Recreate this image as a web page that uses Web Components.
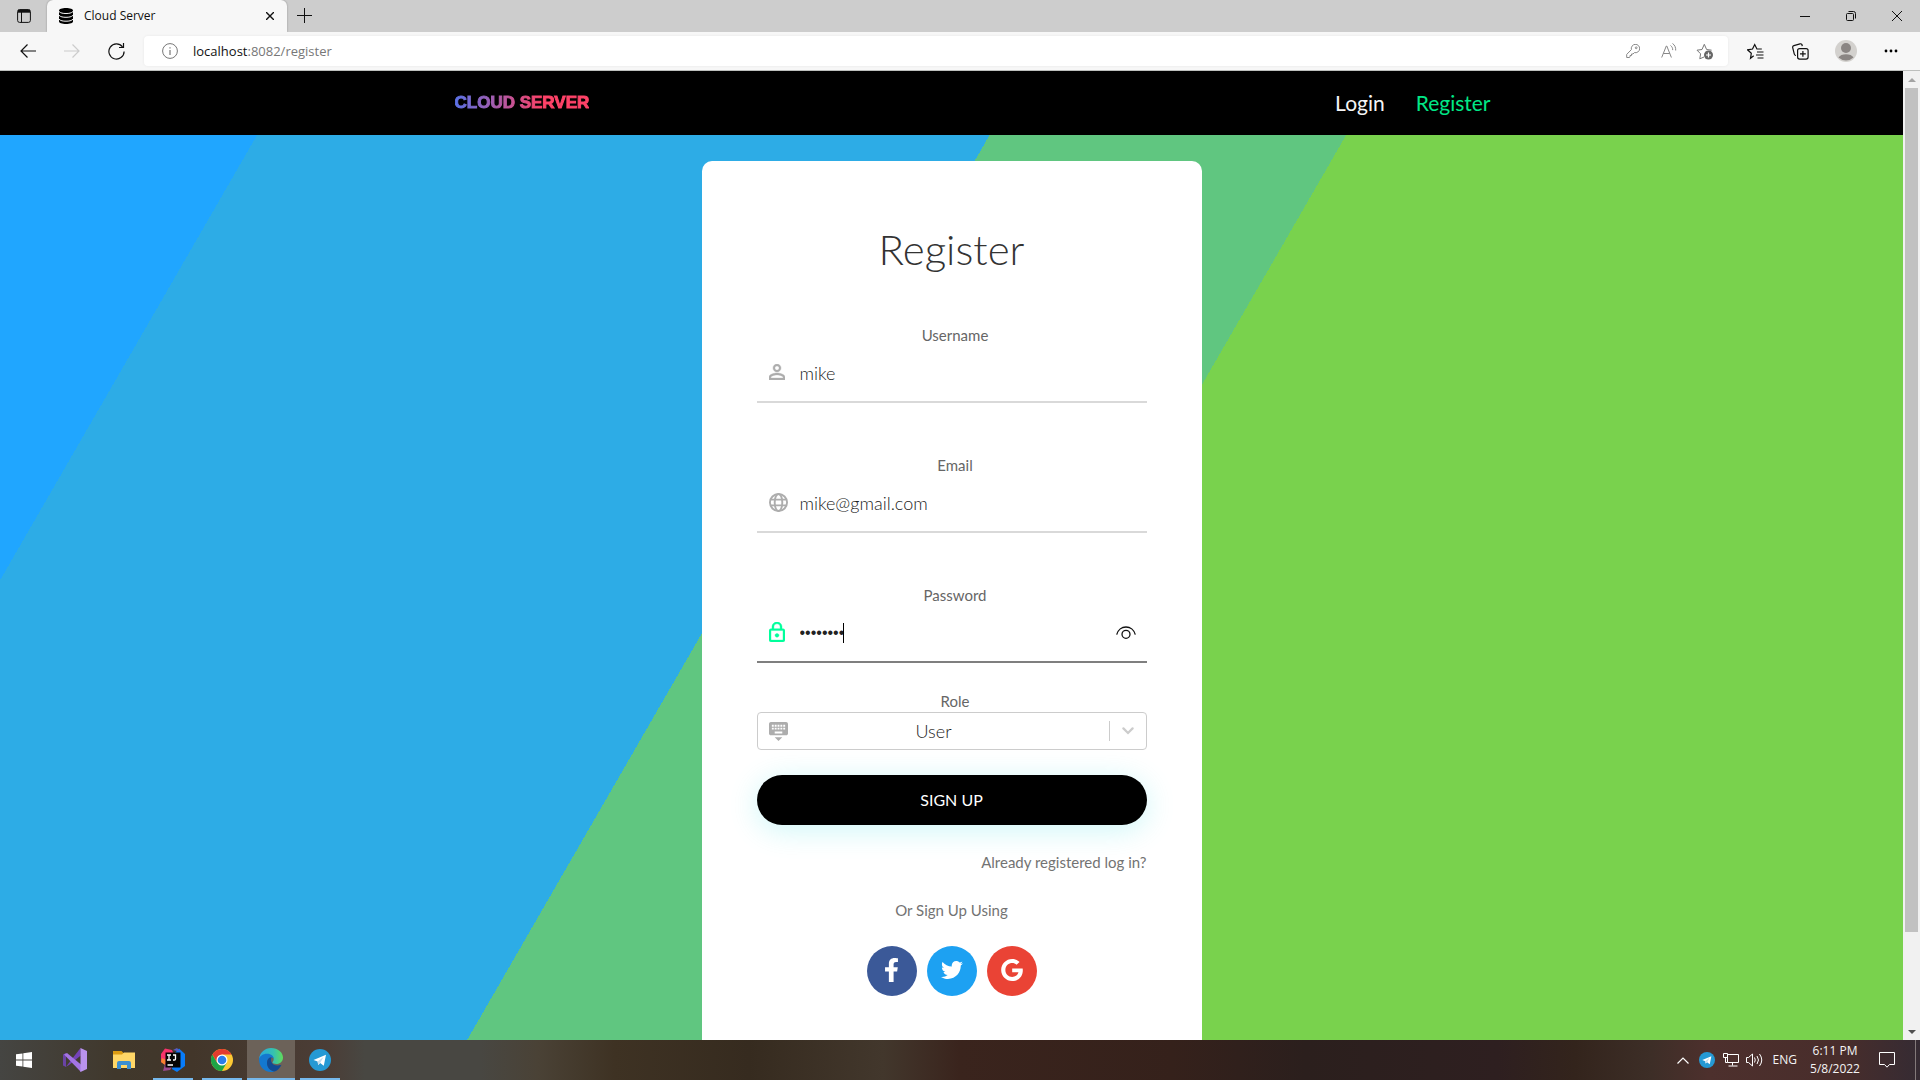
<!DOCTYPE html>
<html lang="en">
<head>
<meta charset="utf-8">
<title>Cloud Server</title>
<style>
  html, body { height: 100%; margin: 0; }
  body { font-family: Lato, "Open Sans", sans-serif; overflow: hidden; }
</style>
</head>
<body>
<desktop-shell></desktop-shell>

<script>
const UI = '"Open Sans", "Noto Sans", sans-serif';

function define(name, css, html, setup) {
  const tpl = document.createElement('template');
  tpl.innerHTML = `<style>*{box-sizing:border-box}button{font:inherit;color:inherit;background:none;border:0;padding:0;margin:0}svg{display:block;flex:none}${css}</style>${html}`;
  customElements.define(name, class extends HTMLElement {
    constructor() {
      super();
      this.attachShadow({ mode: 'open' }).append(tpl.content.cloneNode(true));
    }
    connectedCallback() { if (setup) setup(this.shadowRoot, this); }
  });
}

/* ---------- browser tab strip ---------- */
define('tab-strip', `
  :host { display: flex; flex: none; height: 32px; background: #cdcdcd; font: 12px/16px ${UI}; color: #111; }
  button { display: grid; place-items: center; }
  .menu { width: 47px; }
  .tab { display: flex; align-items: center; gap: 11px; width: 240px; padding: 0 8px 0 12px; background: #f7f7f7; border-radius: 6px 6px 0 0; box-shadow: 0 0 2px #0005; clip-path: inset(0 -3px); }
  .tab span { flex: 1; }
  .close { width: 18px; height: 18px; }
  .add { width: 35px; height: 31px; }
  .win { display: flex; margin-left: auto; }
  .win button { width: 46px; }
`, `
  <button class="menu" aria-label="Tab actions"><svg width="14" height="14" viewBox="0 0 14 14" fill="none" stroke="#111"><rect x=".6" y=".6" width="12.8" height="12.8" rx="2"/><path d="M1 2.2h12" stroke-width="3"/><path d="M4.500 3v10.500"/></svg></button>
  <div class="tab">
    <svg width="14" height="16" viewBox="0 0 14 16"><path d="M0 2.500C0 1.100 3 0 7 0s7 1.100 7 2.500v11C14 14.900 11 16 7 16s-7-1.100-7-2.500z"/><path d="M0 3.500c1.500 1.600 4 2 7 2s5.500-.4 7-2M0 7.300c1.500 1.600 4 2 7 2s5.500-.4 7-2M0 11.200c1.500 1.600 4 2 7 2s5.500-.4 7-2" fill="none" stroke="#f7f7f7"/></svg>
    <span>Cloud Server</span>
    <button class="close" aria-label="Close tab"><svg width="8" height="8" viewBox="0 0 8 8" stroke="#111" stroke-width="1.400"><path d="M0 0l8 8M8 0L0 8"/></svg></button>
  </div>
  <button class="add" aria-label="New tab"><svg width="15" height="15" viewBox="0 0 15 15" stroke="#111" stroke-width="1"><path d="M0 7.500h15M7.500 0v15"/></svg></button>
  <div class="win">
    <button aria-label="Minimize"><svg width="10" height="10" viewBox="0 0 10 10" stroke="#111"><path d="M0 5.500h10"/></svg></button>
    <button aria-label="Restore"><svg width="10" height="10" viewBox="0 0 10 10" fill="none" stroke="#111"><rect x=".5" y="2.500" width="7" height="7" rx="1"/><path d="M2.500.5h5a2 2 0 0 1 2 2v5"/></svg></button>
    <button aria-label="Close"><svg width="10" height="10" viewBox="0 0 10 10" stroke="#111"><path d="M0 0l10 10M10 0L0 10"/></svg></button>
  </div>
`);

/* ---------- address toolbar ---------- */
define('address-toolbar', `
  :host { display: flex; flex: none; align-items: center; height: 39px; padding: 0 7px 0 6px; background: #f7f7f7; border-bottom: 1px solid #bdbfbd; font: 13px/20px ${UI}; }
  button { display: grid; place-items: center; width: 44px; height: 30px; }
  .bar { display: flex; flex: 1; align-items: center; height: 30px; margin: 0 5px 0 6px; padding: 0 5px 0 18px; background: #fff; border-radius: 4px; box-shadow: 0 0 3px #0001; }
  .url { flex: 1; margin-left: 15px; color: #777; }
  .url b { font-weight: 400; color: #111; }
  .bar button { width: 36px; }
  .tools { display: flex; }
  .tools button { width: 45px; }
`, `
  <button aria-label="Back"><svg width="16" height="14" viewBox="0 0 16 14" fill="none" stroke="#111" stroke-width="1.200"><path d="M16 7H1M7.500.5L1 7l6.500 6.500"/></svg></button>
  <button aria-label="Forward"><svg width="16" height="14" viewBox="0 0 16 14" fill="none" stroke="#ccc" stroke-width="1.200"><path d="M0 7h15M8.500.5L15 7l-6.500 6.500"/></svg></button>
  <button aria-label="Refresh"><svg width="17" height="17" viewBox="0 0 17 17" fill="none" stroke="#111" stroke-width="1.200"><path d="M14.500 3.800A7.600 7.600 0 1 0 16.100 8.500M15.500 0v4.500H11"/></svg></button>
  <div class="bar">
    <svg width="16" height="16" viewBox="0 0 16 16" fill="none" stroke="#777"><circle cx="8" cy="8" r="7.400"/><path d="M8 7v5M8 4.200v1.300" stroke-width="1.200"/></svg>
    <div class="url"><b>localhost</b>:8082/register</div>
    <button aria-label="Saved passwords"><svg width="14" height="14" viewBox="0 0 14 14" fill="none" stroke="#888"><path d="M5.400 5.600A4.200 4.200 0 1 1 8.400 8.600L7 10H5.500v1.500H4V13l-.5.500H.7v-3.100z"/><circle cx="10.200" cy="3.800" r=".9"/></svg></button>
    <button aria-label="Read aloud"><svg width="16" height="16" viewBox="0 0 16 16" fill="none" stroke="#888"><path d="M.7 14.500L5.300 3h.5l4.600 11.500M2.300 10.500h6.500M9.500 2.500c1.500 1 2.300 2.600 2.200 4.600M11.500.5c2.300 1.500 3.400 4 3.200 7"/></svg></button>
    <button aria-label="Add to favorites"><svg width="18" height="17" viewBox="0 0 18 17" fill="none" stroke="#777"><path d="M8 14l-4.200 1.800.8-5L1 7.200l5-.7L8.300 1.300l2.300 5.200 5 .7"/><circle cx="12.500" cy="12" r="4.500" fill="#666" stroke="none"/><path d="M12.500 9.500v5M10 12h5" stroke="#fff" stroke-width="1.200"/></svg></button>
  </div>
  <div class="tools">
    <button aria-label="Favorites"><svg width="17" height="17" viewBox="0 0 17 17" fill="none" stroke="#111" stroke-width="1.200"><path d="M7.200 12.800L4 15.300l.8-5L1 6.800l5-.8 2.200-4.500L10.400 6h4.900M10.500 9H17M9.500 12H17M11 15h6" transform="translate(-.5)"/></svg></button>
    <button aria-label="Collections"><svg width="17" height="17" viewBox="0 0 17 17" fill="none" stroke="#111" stroke-width="1.200"><path d="M4 12.500c-1 0-1.400-.5-1.700-1.400L.7 4.600c-.2-1 .2-1.700 1.200-2L8 .8c1-.2 1.800.1 2 1.200l.3 1.200"/><rect x="5.600" y="5.600" width="10.500" height="10.500" rx="2"/><path d="M10.900 8v5.800M8 10.900h5.800"/></svg></button>
    <button aria-label="Profile"><svg width="22" height="22" viewBox="0 0 22 22"><circle cx="11" cy="11" r="11" fill="#d3d1ce"/><circle cx="11" cy="8" r="5" fill="#8a8583"/><path d="M3.500 17.500c2-4.500 13-4.500 15 0a11 11 0 0 1-15 0z" fill="#8a8583"/></svg></button>
    <button aria-label="Settings and more"><svg width="14" height="4" viewBox="0 0 14 4"><circle cx="2" cy="2" r="1.400"/><circle cx="7" cy="2" r="1.400"/><circle cx="12" cy="2" r="1.400"/></svg></button>
  </div>
`);

/* ---------- site navigation ---------- */
define('site-nav', `
  :host { display: block; flex: none; background: #000; }
  nav { display: flex; align-items: center; gap: 31px; height: 64px; max-width: 1140px; margin: 0 auto; padding: 0 31px 0 73px; font-size: 21px; line-height: 28px; }
  a { color: #f5f5f5; text-decoration: none; }
  .brand { margin-right: auto; font: 900 17px/24px "Liberation Sans", Arial, sans-serif; background: linear-gradient(90deg, #5b72e8, #ff4268 65%); -webkit-background-clip: text; background-clip: text; color: transparent; -webkit-text-stroke: 1px transparent; }
  .on { color: #00e887; }
`, `<nav><a class="brand" href="#">CLOUD SERVER</a><a href="#">Login</a><a class="on" href="#">Register</a></nav>`);

/* ---------- underlined text field ---------- */
define('text-field', `
  :host { display: block; --line: #d9d9d9; --icon: #adadad; }
  :host([active]) { --line: #7f7f7f; --icon: #00ff9c; }
  label { display: block; padding-left: 7px; font-size: 15px; line-height: 22px; color: #666; text-align: center; }
  .row { display: grid; align-items: center; border-bottom: 2px solid var(--line); }
  .row > * { grid-area: 1 / 1; }
  input { width: 100%; height: 55px; padding: 0 43px 2px; border: 0; outline: 0; background: none; font: 300 18px/24px Lato, sans-serif; color: #222; }
  :host([active]) input { font: 16px/24px "Liberation Sans", sans-serif; }
  .icon { padding: 0 0 3px 12px; color: var(--icon); pointer-events: none; }
  .end { justify-self: end; padding: 0 11px 2px 0; }
  .caret { display: none; width: 1px; height: 20px; margin: 0 0 2px 86px; background: #000; }
  :host([active]) .caret { display: block; }
`, `
  <label for="f"></label>
  <div class="row"><input id="f"><span class="icon"><slot name="icon"></slot></span><i class="caret"></i><span class="end"><slot name="end"></slot></span></div>
`, (root, host) => {
  root.querySelector('label').textContent = host.getAttribute('label');
  const input = root.querySelector('input');
  input.type = host.getAttribute('type') || 'text';
  input.value = host.getAttribute('value');
});

/* ---------- role drop-down ---------- */
define('role-select', `
  :host { display: block; }
  label { display: block; padding-left: 7px; font-size: 15px; line-height: 22px; color: #666; text-align: center; }
  .box { display: grid; align-items: center; height: 38px; border: 1px solid #ccc; border-radius: 4px; }
  .box > * { grid-area: 1 / 1; }
  select { appearance: none; width: 100%; height: 36px; padding: 0 36px 0 0; border: 0; outline: 0; background: none; font: 300 18px/24px Lato, sans-serif; color: #222; text-align: center; text-align-last: center; }
  .icon { padding-left: 11px; pointer-events: none; }
  .arrow { display: flex; align-items: center; justify-self: end; width: 37px; height: 20px; padding-left: 12px; border-left: 1px solid #ccc; pointer-events: none; }
`, `
  <label for="role">Role</label>
  <div class="box">
    <select id="role"><option>User</option></select>
    <span class="icon"><svg width="19" height="19" viewBox="2 3 20 20" fill="#adadad"><path d="M20 3H4c-1.100 0-1.990.9-1.990 2L2 15c0 1.100.9 2 2 2h16c1.100 0 2-.9 2-2V5c0-1.100-.9-2-2-2zm-9 3h2v2h-2V6zm0 3h2v2h-2V9zM8 6h2v2H8V6zm0 3h2v2H8V9zm-1 2H5V9h2v2zm0-3H5V6h2v2zm9 7H8v-2h8v2zm0-4h-2V9h2v2zm0-3h-2V6h2v2zm3 3h-2V9h2v2zm0-3h-2V6h2v2zm-7 15l4-4H8l4 4z"/></svg></span>
    <span class="arrow"><svg width="12" height="8" viewBox="0 0 12 8" fill="none" stroke="#ccc" stroke-width="2.200" stroke-linecap="round"><path d="M1.400 1.400L6 6l4.600-4.600"/></svg></span>
  </div>
`);

/* ---------- registration card ---------- */
define('register-card', `
  :host { display: block; width: 500px; padding: 65px 55px 90px; background: #fff; border-radius: 10px; color: #333; }
  h1 { margin: 0 0 51px; font-weight: 300; font-size: 42px; line-height: 47px; text-align: center; }
  form { display: flex; flex-direction: column; }
  text-field + text-field { margin-top: 51px; }
  role-select { margin-top: 27px; }
  .submit { height: 50px; margin-top: 25px; border-radius: 25px; background: #000; color: #fff; font-size: 16px; line-height: 24px; box-shadow: 0 5px 30px 0 #03d8de33; }
  .login { align-self: flex-end; margin-top: 26px; font-size: 15px; line-height: 22px; color: #737373; text-decoration: none; }
  p { margin: 26px 0 25px; font-size: 15px; line-height: 22px; color: #737373; text-align: center; }
  .social { display: flex; justify-content: center; gap: 10px; }
  .social a { display: grid; place-items: center; width: 50px; height: 50px; padding-bottom: 3px; border-radius: 50%; }
`, `
  <h1>Register</h1>
  <form>
    <text-field label="Username" value="mike"><svg slot="icon" width="16" height="16" viewBox="4 4 16 16" fill="currentColor" stroke="currentColor" stroke-width=".4"><path d="M12 5.900c1.160 0 2.100.94 2.100 2.100s-.94 2.100-2.100 2.100S9.900 9.160 9.900 8s.94-2.100 2.100-2.100m0 9c2.970 0 6.100 1.460 6.100 2.100v1.100H5.900V17c0-.64 3.130-2.100 6.100-2.100M12 4C9.790 4 8 5.790 8 8s1.790 4 4 4 4-1.790 4-4-1.790-4-4-4zm0 9c-2.670 0-8 1.340-8 4v3h16v-3c0-2.660-5.330-4-8-4z"/></svg></text-field>
    <text-field label="Email" value="mike@gmail.com"><svg slot="icon" width="19" height="19" viewBox="0 0 20 20" fill="none" stroke="currentColor" stroke-width="2"><circle cx="10" cy="10" r="9"/><ellipse cx="10" cy="10" rx="4" ry="9"/><path d="M1.500 7h17M1.500 13h17"/></svg></text-field>
    <text-field label="Password" type="password" value="password" active><svg slot="icon" width="16" height="20" viewBox="4 1 16 21" fill="currentColor" stroke="currentColor" stroke-width=".4" preserveAspectRatio="none"><path d="M12 17c1.100 0 2-.9 2-2s-.9-2-2-2-2 .9-2 2 .9 2 2 2zm6-9h-1V6c0-2.760-2.240-5-5-5S7 3.240 7 6v2H6c-1.100 0-2 .9-2 2v10c0 1.100.9 2 2 2h12c1.100 0 2-.9 2-2V10c0-1.100-.9-2-2-2zM8.900 6c0-1.710 1.390-3.100 3.100-3.100s3.100 1.390 3.100 3.100v2H8.900V6zM18 20H6V10h12v10z"/></svg><svg slot="end" width="20" height="13" viewBox="0 0 20 13" fill="none" stroke="#111" stroke-width="1.300"><path d="M.7 8.700C3-1.600 17-1.600 19.300 8.700"/><circle cx="10" cy="8.300" r="4"/></svg></text-field>
    <role-select></role-select>
    <button class="submit" type="button">SIGN UP</button>
    <a class="login" href="#">Already registered log in?</a>
  </form>
  <p>Or Sign Up Using</p>
  <div class="social">
    <a href="#" aria-label="Facebook" style="background:#3b5998"><svg width="13" height="24" viewBox="22 0 276 512" preserveAspectRatio="none" fill="#fff"><path d="M279.140 288l14.220-92.660h-88.910v-60.130c0-25.350 12.420-50.060 52.240-50.060h40.420V6.260S260.430 0 225.360 0c-73.220 0-121.080 44.380-121.080 124.720v70.620H22.890V288h81.390v224h100.170V288z"/></svg></a>
    <a href="#" aria-label="Twitter" style="background:#1da1f2"><svg width="22" height="22" viewBox="0 0 512 512" fill="#fff"><path d="M459.370 151.716c.325 4.548.325 9.097.325 13.645 0 138.720-105.583 298.558-298.558 298.558-59.452 0-114.680-17.219-161.137-47.106 8.447.974 16.568 1.299 25.340 1.299 49.055 0 94.213-16.568 130.274-44.832-46.132-.975-84.792-31.188-98.112-72.772 6.498.974 12.995 1.624 19.818 1.624 9.421 0 18.843-1.300 27.614-3.573-48.081-9.747-84.143-51.980-84.143-102.985v-1.299c13.969 7.797 30.214 12.670 47.431 13.319-28.264-18.843-46.781-51.005-46.781-87.391 0-19.492 5.197-37.360 14.294-52.954 51.655 63.675 129.300 105.258 216.365 109.807-1.624-7.797-2.599-15.918-2.599-24.040 0-57.828 46.782-104.934 104.934-104.934 30.213 0 57.502 12.670 76.670 33.137 23.715-4.548 46.456-13.320 66.599-25.340-7.798 24.366-24.366 44.833-46.132 57.827 21.117-2.273 41.584-8.122 60.426-16.243-14.292 20.791-32.161 39.308-52.628 54.253z"/></svg></a>
    <a href="#" aria-label="Google" style="background:#ea4335"><svg width="22" height="22" viewBox="0 8 488 496" fill="#fff"><path d="M488 261.800C488 403.300 391.100 504 248 504 110.800 504 0 393.200 0 256S110.800 8 248 8c66.800 0 123 24.500 166.300 64.900l-67.500 64.900C258.500 52.600 94.300 116.600 94.300 256c0 86.500 69.100 156.600 153.700 156.600 98.200 0 135-70.400 140.800-106.900H248v-85.300h236.100c2.300 12.700 3.900 24.900 3.900 41.400z"/></svg></a>
  </div>
`);

/* ---------- page scroll bar ---------- */
define('page-scrollbar', `
  :host { display: flex; flex: none; flex-direction: column; align-items: center; width: 17px; background: #f1f1f1; }
  .btn { display: grid; flex: none; place-items: center; height: 17px; }
  .track { flex: 1; width: 13px; }
  .thumb { height: 97%; background: #c1c1c1; }
  .thumb { height: 90.3%; }
`, `
  <span class="btn"><svg width="8" height="4" viewBox="0 0 8 4" fill="#a3a3a3"><path d="M0 4l4-4 4 4z"/></svg></span>
  <div class="track"><div class="thumb"></div></div>
  <span class="btn"><svg width="8" height="4" viewBox="0 0 8 4" fill="#505050"><path d="M0 0l4 4 4-4z"/></svg></span>
`);

/* ---------- task bar ---------- */
define('task-item', `
  :host { display: block; width: 48px; }
  button { display: grid; place-items: center; width: 100%; height: 40px; }
  :host([running]) button { background: linear-gradient(#76b9ed, #76b9ed) center bottom / 40px 2px no-repeat; }
  :host([current]) button { background: linear-gradient(#76b9ed, #76b9ed) center bottom / 100% 2px no-repeat, #6c6259; }
`, `<button><slot></slot></button>`, (root, host) => root.querySelector('button').setAttribute('aria-label', host.getAttribute('name')));

const telegram = s => `<svg width="${s}" height="${s}" viewBox="0 0 22 22"><circle cx="11" cy="11" r="11" fill="#2599d4"/><path d="M4.500 11L17 5.800l-2.200 11-3.700-2.800-1.900 1.900-.6-3.300z" fill="#fff"/><path d="M8.600 12.600L14.500 8l-3.400 6-1.900 1.900z" fill="#c3dcec"/></svg>`;

define('task-bar', `
  :host { display: flex; flex: none; height: 40px; background: linear-gradient(90deg, #454542, #40382c 6%, #42362a 10%, #4b3d36 17%, #484742 19%, #484742 25%, #4a4236 28%, #3e3223 32%, #362b1f 39%, #42372c 46%, #3a241d 50%, #35211b 61%, #2b1f1d 68%, #2e1f20 78%, #33241c 82%, #3d2e27 86%, #4d302d 89%, #482d2b 96%, #352b33); color: #f4f4f4; font: 12px/18px ${UI}; }
  .apps, .tray { display: flex; align-items: center; }
  .apps { gap: 1px; }
  .start { margin-right: 2px; }
  .tray { margin-left: auto; }
  .tray button { display: grid; place-items: center; width: 24px; height: 40px; }
  .lang { padding: 0 6px; }
  .clock { width: 64px; text-align: center; }
  .tray .note { width: 40px; margin-right: 8px; }
  .show { width: 5px; height: 40px; border-left: 1px solid #83797a; }
`, `
  <div class="apps">
    <task-item class="start" name="Start"><svg width="16" height="16" viewBox="0 0 16 16" fill="#fff"><path d="M0 2.300L6.500 1.400v6.200H0zM7.300 1.300L16 0v7.600H7.300zM0 8.400h6.500v6.200L0 13.700zM7.300 8.400H16V16l-8.700-1.300z"/></svg></task-item>
    <task-item name="Visual Studio"><svg width="24" height="24" viewBox="0 0 24 24"><path d="M0 6.500L3 5v14l-3-1.500z" fill="#6a43a6"/><path d="M3 18.800L17.500 0v7.800L6 17z" fill="#7443b8"/><path d="M1 6.500L4 5l14 11.500V24z" fill="#a374e4"/><path d="M17.500 0v24l6.500-3V3z" fill="#ba93ee"/></svg></task-item>
    <task-item name="File Explorer"><svg width="22" height="18" viewBox="0 0 22 18"><path d="M0 0h8.500l2 2H21v5H0z" fill="#dc9c13"/><path d="M0 3.500h9l2-2h11V17H0z" fill="#ffd767"/><path d="M4 18v-6q0-2 2-2h10q2 0 2 2v6h-4v-4H8v4z" fill="#3b8fd1"/></svg></task-item>
    <task-item name="IntelliJ IDEA" running><svg width="24" height="24" viewBox="0 0 24 24"><path d="M0 6L4 .5 11 2l3 7-9 8-5-3z" fill="#f7336b"/><path d="M1 10l4 2-1 5-4-3z" fill="#f78330"/><path d="M2 23l2-7 8 2-3 4z" fill="#9a4a8f"/><path d="M14 5l4-4.500L24 6v12l-8 6-5-3z" fill="#087cfa"/><path d="M12 2l4-2 4 4z" fill="#5b5bc0"/><path d="M4.500 4.500h15v15h-15z" fill="#060606"/><path d="M6 7h4M8 7v5M6 12h4M12 7h2.500v4q0 1-1 1H12M6.500 17H12" fill="none" stroke="#fff" stroke-width="1.300"/></svg></task-item>
    <task-item name="Chrome" running><svg width="22" height="22" viewBox="0 0 22 22"><circle cx="11" cy="11" r="11" fill="#fcc934"/><path d="M1.470 5.500L6.240 13.750 15.760 13.750 11 22A11 11 0 0 1 1.470 5.500z" fill="#1ea446"/><path d="M1.470 5.500A11 11 0 0 1 20.530 5.500H11L6.240 13.750z" fill="#e33b2e"/><circle cx="11" cy="11" r="5.500" fill="#fff"/><circle cx="11" cy="11" r="4.300" fill="#2b7de9"/></svg></task-item>
    <task-item name="Edge" current><svg width="24" height="24" viewBox="0 0 24 24"><defs><linearGradient id="g"><stop stop-color="#29a9e0"/><stop offset=".6" stop-color="#35c1b1"/><stop offset="1" stop-color="#60dc5a"/></linearGradient></defs><path d="M0 11C1 4 6 0 12 0c7 0 12 4.500 12 9.500 0 4-3 6.500-6.500 6.500-2.500 0-4-.8-4-1.500s1.200-1.300 1.200-3.500S12.500 7 9 7c-4.500 0-7.500 2-9 4z" fill="url(#g)"/><path d="M0 11c1-3 4-5.200 8-5.200 4.500 0 6.500 2.700 6.700 4.700C12 8 8.500 10 8 14c-.5 5 4 9.500 8 9.500-2 .5-3 .5-4 .5C5 24 0 18.500 0 11z" fill="#1478cf"/><path d="M8 14c.3-3 2.300-4.600 4.500-4.700-1.500 4 .5 8.500 6.500 8.200 1.500 0 2.700-.6 3.500-.7C20.500 21 17 23.500 15.500 23.500 11.500 23 7.500 19.500 8 14z" fill="#114a93"/></svg></task-item>
    <task-item name="Telegram" running>${telegram(22)}</task-item>
  </div>
  <div class="tray">
    <button aria-label="Show hidden icons"><svg width="12" height="7" viewBox="0 0 12 7" fill="none" stroke="#fff" stroke-width="1.200"><path d="M.5 6.500L6 1l5.500 5.500"/></svg></button>
    <button aria-label="Telegram">${telegram(16)}</button>
    <button aria-label="Network"><svg width="16" height="14" viewBox="0 0 16 14" fill="none" stroke="#fff"><path d="M4.500 1.500h11v8h-11zM9.500 9.500v3M5.500 13h9M.5.500h4v4h-4zM2.500 4.500v5h2"/></svg></button>
    <button aria-label="Volume"><svg width="17" height="14" viewBox="0 0 17 14" fill="none" stroke="#fff"><path d="M.5 4.500h2l4-3.500v12l-4-3.500h-2zM8.500 4.500q1.500 2.500 0 5M11 3q3 4 0 8M13.500 1q4.500 6 0 12"/></svg></button>
    <span class="lang">ENG</span>
    <div class="clock">6:11 PM<br>5/8/2022</div>
    <button class="note" aria-label="Notifications"><svg width="16" height="16" viewBox="0 0 16 16" fill="none" stroke="#fff"><path d="M.5.500h15v12h-5l-2.500 2.700-2.500-2.700h-5z"/></svg></button>
    <span class="show"></span>
  </div>
`);

/* ---------- whole desktop ---------- */
define('desktop-shell', `
  :host { display: flex; flex-direction: column; height: 100vh; }
  .view { display: flex; flex: 1; min-height: 0; }
  .page { display: flex; flex: 1; flex-direction: column; min-width: 0; overflow: hidden; }
  main { flex: 1; min-height: 0; padding-top: 26px; background: linear-gradient(120deg, #20a6ff 10.6%, #2dace6 10.6% 40.8%, #60c680 40.8% 55.5%, #79d24d 55.5%); }
  register-card { margin: 0 auto; }
`, `
  <tab-strip></tab-strip>
  <address-toolbar></address-toolbar>
  <div class="view">
    <div class="page">
      <site-nav></site-nav>
      <main><register-card></register-card></main>
    </div>
    <page-scrollbar></page-scrollbar>
  </div>
  <task-bar></task-bar>
`);
</script>
</body>
</html>
